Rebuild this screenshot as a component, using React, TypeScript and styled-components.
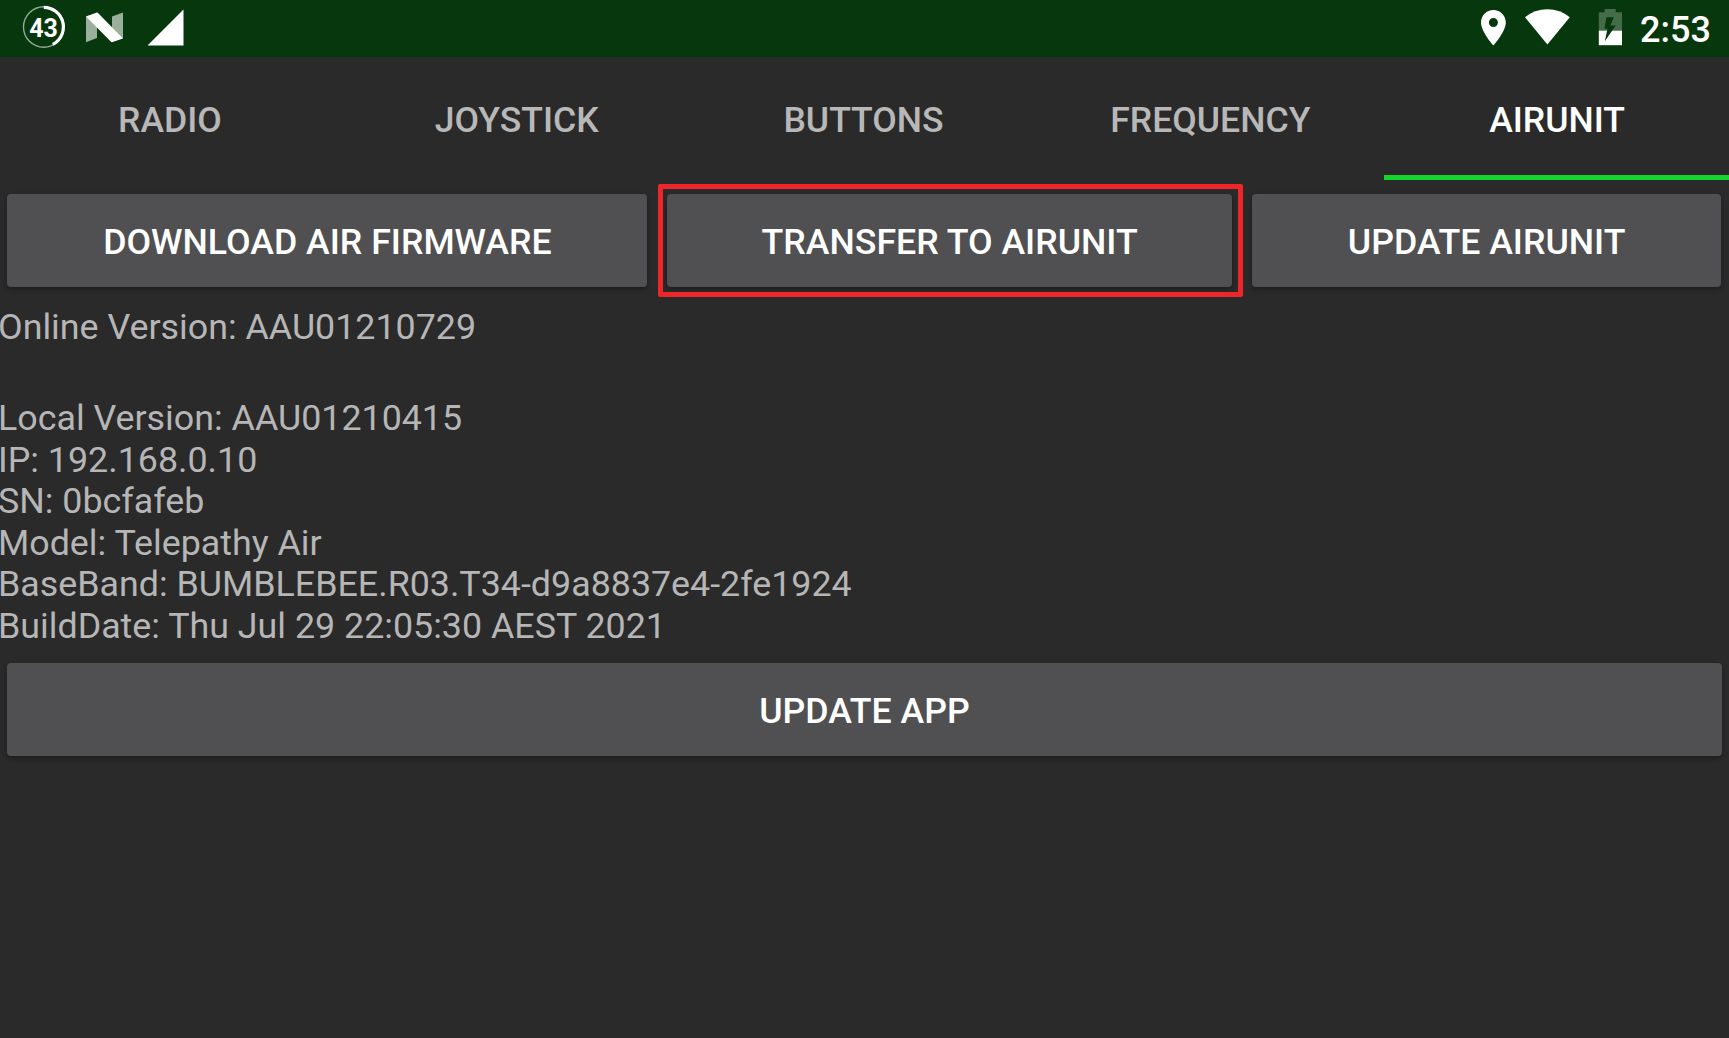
import React from "react";
import styled, { createGlobalStyle } from "styled-components";

const Global = createGlobalStyle`
  * { box-sizing: border-box; }
  html, body { margin: 0; background: #2a2a2a; }
  body { font-family: Roboto, "Noto Sans", sans-serif; overflow: hidden; }
`;

const Screen = styled.div`
  display: flex;
  flex-direction: column;
  width: 1729px;
  height: 1038px;
  background: #2a2a2a;
`;

const StatusBar = styled.header`
  display: flex;
  justify-content: space-between;
  flex: none;
  height: 57.4px;
  background: #06370d;
  color: #fff;
`;

const StatusGroup = styled.div`
  display: flex;
  align-items: flex-start;
`;

const StatusIcon = styled.svg<{ $gap: number }>`
  display: block;
  flex: none;
  height: 57px;
  margin-left: ${(p) => p.$gap}px;
`;

const SpeedText = styled.text`
  font-size: 25px;
  font-weight: 700;
  fill: #fff;
`;

const Clock = styled.time`
  width: 72px;
  margin: 0 17px 0 17px;
  font-size: 36px;
  font-weight: 500;
  line-height: 60px;
  white-space: nowrap;
`;

const TabBar = styled.nav`
  display: grid;
  grid-template-columns: repeat(5, 346.8px);
  flex: none;
  height: 122.4px;
  margin-left: -3.5px;
`;

const Tab = styled.button<{ $active?: boolean }>`
  padding: 7px 0 0 0;
  border: 0;
  border-bottom: 5px solid ${(p) => (p.$active ? "#12d62c" : "transparent")};
  background: none;
  color: ${(p) => (p.$active ? "#fff" : "#b8b8b8")};
  font: 500 35.6px Roboto, sans-serif;
`;

const Actions = styled.div`
  display: flex;
  flex: none;
  gap: 19.5px;
  padding: 14px 7.4px 0;
`;

const ActionButton = styled.button<{ $width?: number }>`
  position: relative;
  width: ${(p) => (p.$width ? `${p.$width}px` : "100%")};
  height: 93px;
  padding: 3px 0 0;
  border: 0;
  border-radius: 4px;
  background: #505052;
  box-shadow: 0 2px 5px rgba(0, 0, 0, 0.35);
  color: #fff;
  font: 500 35.7px Roboto, sans-serif;
`;

const Highlight = styled.span`
  position: absolute;
  inset: -9.5px -10.5px -10px -8.5px;
  border: 5px solid #ee2629;
  border-radius: 2px;
`;

const Info = styled.section`
  padding-top: 20.4px;
  color: #b6b6b6;
  font-size: 35.8px;
  line-height: 41.5px;
  text-indent: -2px;
`;

const InfoLine = styled.div<{ $after?: number }>`
  height: 41.5px;
  margin-bottom: ${(p) => p.$after ?? 0}px;
  white-space: nowrap;
`;

const Footer = styled.div`
  padding: 15.7px 7.4px 0;
`;

const info = [
  "Online Version: AAU01210729",
  "Local Version: AAU01210415",
  "IP: 192.168.0.10",
  "SN: 0bcfafeb",
  "Model: Telepathy Air",
  "BaseBand: BUMBLEBEE.R03.T34-d9a8837e4-2fe1924",
  "BuildDate: Thu Jul 29 22:05:30 AEST 2021",
];

const tabs = ["RADIO", "JOYSTICK", "BUTTONS", "FREQUENCY", "AIRUNIT"];

export default function App() {
  return (
    <Screen>
      <Global />
      <StatusBar>
        <StatusGroup>
          <StatusIcon $gap={22} width="44" viewBox="22 0 44 57">
            <circle cx="43.8" cy="27" r="20.3" fill="none" stroke="#91ad94" strokeWidth="1.4" />
            <path d="M43.8 7.4A19.6 19.6 0 0 1 52.8 44.4" fill="none" stroke="#fff" strokeWidth="3.2" />
            <SpeedText x="43.5" y="36.7" textAnchor="middle">43</SpeedText>
          </StatusIcon>
          <StatusIcon $gap={19} width="40" viewBox="85 0 40 57">
            <path d="M86 16.5 97 12.5V38L86 42.3ZM112 16.5 123 12.5V38L112 42.3Z" fill="#9aaf9c" />
            <path d="M86 16.5 97.5 12.5 123 38.5 111.5 42.3Z" fill="#fff" />
          </StatusIcon>
          <StatusIcon $gap={21} width="40" viewBox="146 0 40 57">
            <path d="M183.5 9.5V45.5H147.5Z" fill="#fff" />
          </StatusIcon>
        </StatusGroup>
        <StatusGroup>
          <StatusIcon $gap={0} width="28" viewBox="1479 0 28 57">
            <path
              d="M1493.4 10C1486.5 10 1481 15.5 1481 22.5C1481 31.8 1493.4 45.5 1493.4 45.5S1505.8 31.8 1505.8 22.5C1505.8 15.5 1500.3 10 1493.4 10ZM1493.4 27A4.5 4.5 0 1 1 1493.4 18A4.5 4.5 0 0 1 1493.4 27Z"
              fill="#fff"
            />
          </StatusIcon>
          <StatusIcon $gap={16} width="48" viewBox="1523 0 48 57">
            <path d="M1525 17.3Q1534.5 9.2 1547.4 9.2T1569.8 17.3L1547.4 44.5Z" fill="#fff" />
          </StatusIcon>
          <StatusIcon $gap={25} width="27" viewBox="1596 0 27 57">
            <path d="M1598.8 12.3H1604.6V9H1615.8V12.3H1622V31H1598.8Z" fill="#446c49" />
            <path d="M1598.8 30.7H1622V45.2H1598.8Z" fill="#fff" />
            <path d="M1606.5 17.2H1613.8L1610.3 25.5H1615.7L1604.8 41.3L1607.5 28.7H1604.5Z" fill="#06370d" />
          </StatusIcon>
          <Clock>2:53</Clock>
        </StatusGroup>
      </StatusBar>
      <TabBar>
        {tabs.map((t) => (
          <Tab key={t} $active={t === "AIRUNIT"}>{t}</Tab>
        ))}
      </TabBar>
      <Actions>
        <ActionButton $width={640}>DOWNLOAD AIR FIRMWARE</ActionButton>
        <ActionButton $width={565.5}>
          TRANSFER TO AIRUNIT
          <Highlight />
        </ActionButton>
        <ActionButton $width={469.5}>UPDATE AIRUNIT</ActionButton>
      </Actions>
      <Info>
        {info.map((line, i) => (
          <InfoLine key={line} $after={i === 0 ? 49.5 : 0}>{line}</InfoLine>
        ))}
      </Info>
      <Footer>
        <ActionButton>UPDATE APP</ActionButton>
      </Footer>
    </Screen>
  );
}
